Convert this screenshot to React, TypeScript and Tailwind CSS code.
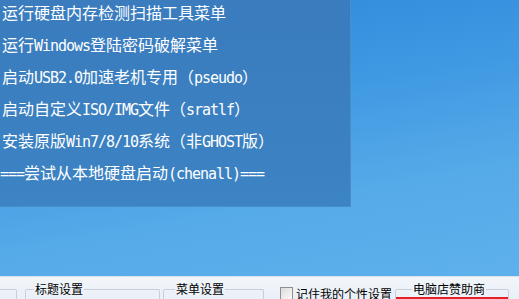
const items = [
  '运行硬盘内存检测扫描工具菜单',
  '运行Windows登陆密码破解菜单',
  '启动USB2.0加速老机专用（pseudo）',
  '启动自定义ISO/IMG文件（sratlf）',
  '安装原版Win7/8/10系统（非GHOST版）',
  '===尝试从本地硬盘启动(chenall)===',
];

// half-width latin runs use a mono face squeezed to 8px a char, like the boot font
function MenuText({ text }: { text: string }) {
  const parts = text.split(/([\x20-\x7e]+)/).filter(Boolean);
  return (
    <>
      {parts.map((p, i) =>
        /^[\x20-\x7e]+$/.test(p) ? (
          <span
            key={i}
            className="font-['DejaVu_Sans_Mono',monospace] text-[15px] leading-none tracking-[-1.03px]"
          >
            {p}
          </span>
        ) : (
          <span key={i} className="leading-none">
            {p}
          </span>
        )
      )}
    </>
  );
}

export default function App() {
  return (
    <div className="relative flex h-[299px] w-[519px] flex-col overflow-hidden bg-[linear-gradient(170deg,#2f86d9_0%,#3e98e2_35%,#55aae8_65%,#5fb2ec_100%)] font-['Noto_Sans_CJK_SC',sans-serif]">
      <div className="h-[276px] shrink-0">
        <div className="h-[211px] w-[351px] border-r border-b border-[#4a8dc8] bg-[linear-gradient(180deg,#3a7cbe_0%,#3b80c1_60%,#3d84c4_100%)]">
          <ul className="-mt-[4px] pl-[2px] text-[16px] text-white">
            {items.map((t, i) => (
              <li
                key={i}
                className={`h-[32px] whitespace-nowrap leading-[32px] ${i === 5 ? '-ml-[2px]' : ''}`}
              >
                <MenuText text={t} />
              </li>
            ))}
          </ul>
        </div>
      </div>

      <div className="relative flex h-[23px] shrink-0 items-start overflow-hidden border-t border-[#d6e2ee] bg-[linear-gradient(180deg,#f2f6fb,#eaf0f7)] text-[12px] leading-none text-black">
        <div className="mt-[12px] h-[20px] w-[17px] rounded-tr-[2px] border-t border-r border-[#c9cfd6]" />
        <div className="relative ml-[8px] mt-[12px] h-[20px] w-[135px] rounded-t-[2px] border-t border-l border-r border-[#c9cfd6]">
          <span className="absolute -top-[7px] left-[8px] bg-[#eef3f9] px-[1px]">标题设置</span>
        </div>
        <div className="relative ml-[3px] mt-[12px] h-[20px] w-[101px] rounded-t-[2px] border-t border-l border-r border-[#c9cfd6]">
          <span className="absolute -top-[7px] left-[11px] bg-[#eef3f9] px-[1px]">菜单设置</span>
        </div>
        <label className="ml-[16px] mt-[10px] flex items-center gap-[3px]">
          <span className="h-[13px] w-[13px] border border-[#8f8f8f] bg-[linear-gradient(135deg,#dcdcdc,#fafafa)]" />
          <span>记住我的个性设置</span>
        </label>
        <div className="relative ml-[3px] mt-[12px] h-[20px] w-[114px] rounded-t-[2px] border-t border-l border-r border-[#c9cfd6]">
          <span className="absolute -top-[7px] left-[16px] bg-[#eef3f9] px-[1px]">电脑店赞助商</span>
          <div className="absolute bottom-0 left-0 right-0 h-[12px] bg-[#e8202a]" />
        </div>
      </div>
    </div>
  );
}
